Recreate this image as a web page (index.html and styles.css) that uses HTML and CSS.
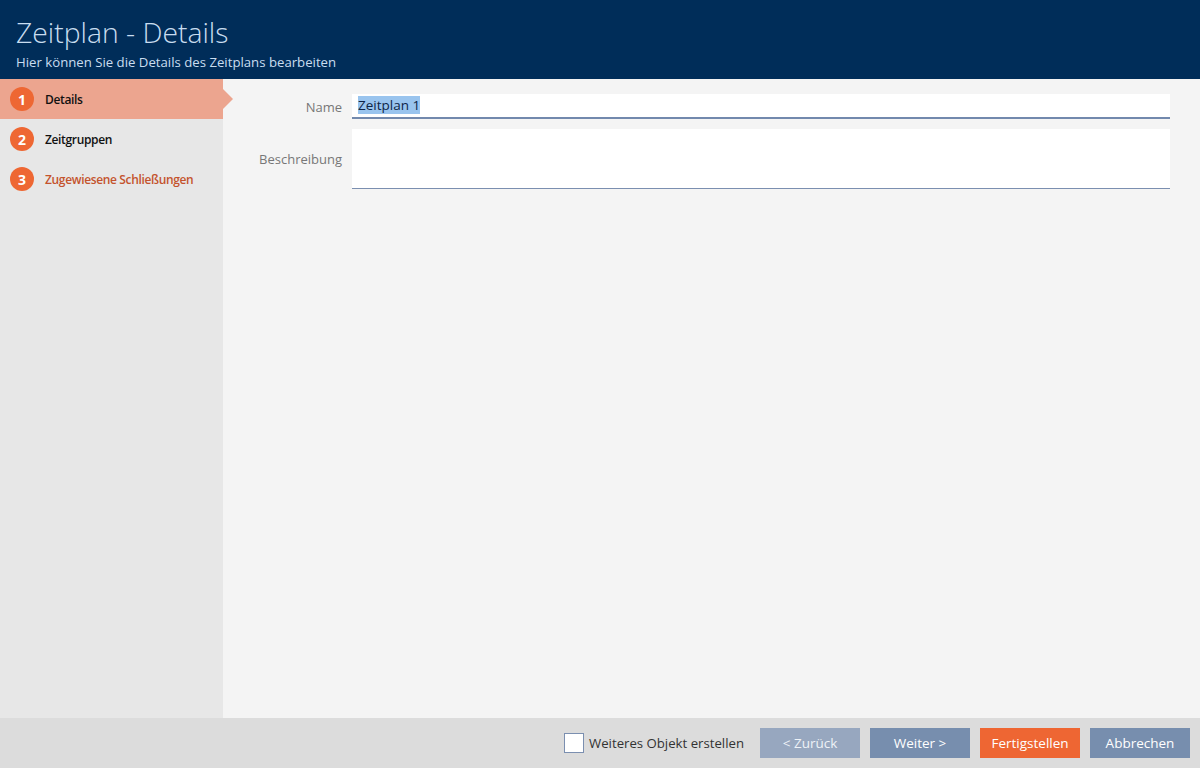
FILE: index.html
```html
<!DOCTYPE html>
<html lang="de">
<head>
<meta charset="utf-8">
<title>Zeitplan - Details</title>
<link rel="stylesheet" href="styles.css">
</head>
<body>
<div class="app">
  <header class="header">
    <h1 class="title">Zeitplan - Details</h1>
    <p class="subtitle">Hier können Sie die Details des Zeitplans bearbeiten</p>
  </header>
  <div class="body">
    <nav class="sidebar">
      <div class="step active"><span class="num">1</span><span class="label">Details</span></div>
      <div class="step"><span class="num">2</span><span class="label">Zeitgruppen</span></div>
      <div class="step warn"><span class="num">3</span><span class="label">Zugewiesene Schließungen</span></div>
    </nav>
    <main class="main">
      <div class="row">
        <label class="flabel">Name</label>
        <div class="input focused"><span class="sel">Zeitplan 1</span></div>
      </div>
      <div class="row tall">
        <label class="flabel">Beschreibung</label>
        <div class="input area"></div>
      </div>
    </main>
  </div>
  <footer class="footer">
    <label class="check"><span class="box"></span><span>Weiteres Objekt erstellen</span></label>
    <button class="btn disabled">&lt; Zurück</button>
    <button class="btn">Weiter &gt;</button>
    <button class="btn primary">Fertigstellen</button>
    <button class="btn">Abbrechen</button>
  </footer>
</div>
</body>
</html>
```
FILE: styles.css
```css
* { box-sizing: border-box; }
html, body { margin: 0; padding: 0; }
body {
  width: 1200px; height: 768px; overflow: hidden;
  font-family: "Open Sans", "Noto Sans", sans-serif;
  font-size: 13px;
}
.app { display: flex; flex-direction: column; height: 768px; }
.header {
  height: 79px; background: #002d59; color: #c9ddf0;
  padding: 13px 16px 0 16px;
}
.title {
  margin: 0; font-weight: 300; font-size: 28.3px; line-height: 38px;
}
.subtitle { margin: 2px 0 0 0; font-size: 13.2px; line-height: 18px; }
.body { flex: 1; display: flex; min-height: 0; }
.sidebar { width: 223px; background: #e7e7e7; }
.step {
  position: relative; height: 40px; display: flex; align-items: center;
  padding-left: 10px; gap: 11px;
}
.step.active { background: #eca58f; }
.step.active::after {
  content: ""; position: absolute; left: 223px; top: 10px;
  border-left: 10px solid #eca58f; border-top: 10px solid transparent; border-bottom: 10px solid transparent;
}
.num {
  width: 24px; height: 24px; border-radius: 50%; background: #ee6733; color: #fff;
  display: flex; align-items: center; justify-content: center;
  font-weight: 700; font-size: 14px;
}
.label { font-weight: 600; font-size: 12px; color: #111; letter-spacing: -0.35px; }
.warn .label { color: #c4532d; }
.main { flex: 1; background: #f4f4f4; padding: 15px 30px 0 35px; display: flex; flex-direction: column; gap: 10px; }
.row { display: flex; align-items: center; gap: 10px; }
.flabel { width: 84px; text-align: right; color: #777; font-size: 13px; }
.input {
  flex: 1; height: 25px; background: #fff; border-bottom: 1px solid #7b8fb0;
  padding: 2px 6px; font-size: 13px; color: #0d2447; line-height: 19px;
}
.input.focused { border-bottom: 2px solid #7289ad; }
.input.area { height: 60px; }
.sel { background: #99c4ee; font-size: 13.5px; }
.footer {
  height: 50px; background: #dcdcdc; display: flex; align-items: center;
  justify-content: flex-end; padding-right: 10px; gap: 10px;
}
.check { display: flex; align-items: center; gap: 5px; color: #333; font-size: 13.2px; margin-right: 6px; }
.box { width: 20px; height: 20px; background: #fff; border: 1px solid #7b8fb0; }
.btn {
  width: 100px; height: 30px; border: 0; background: #778eae; color: #fff;
  font-family: inherit; font-size: 13.5px; padding: 0;
}
.btn.disabled { background: #97a7bf; color: #eef2f7; }
.btn.primary { background: #ee6633; }
```
